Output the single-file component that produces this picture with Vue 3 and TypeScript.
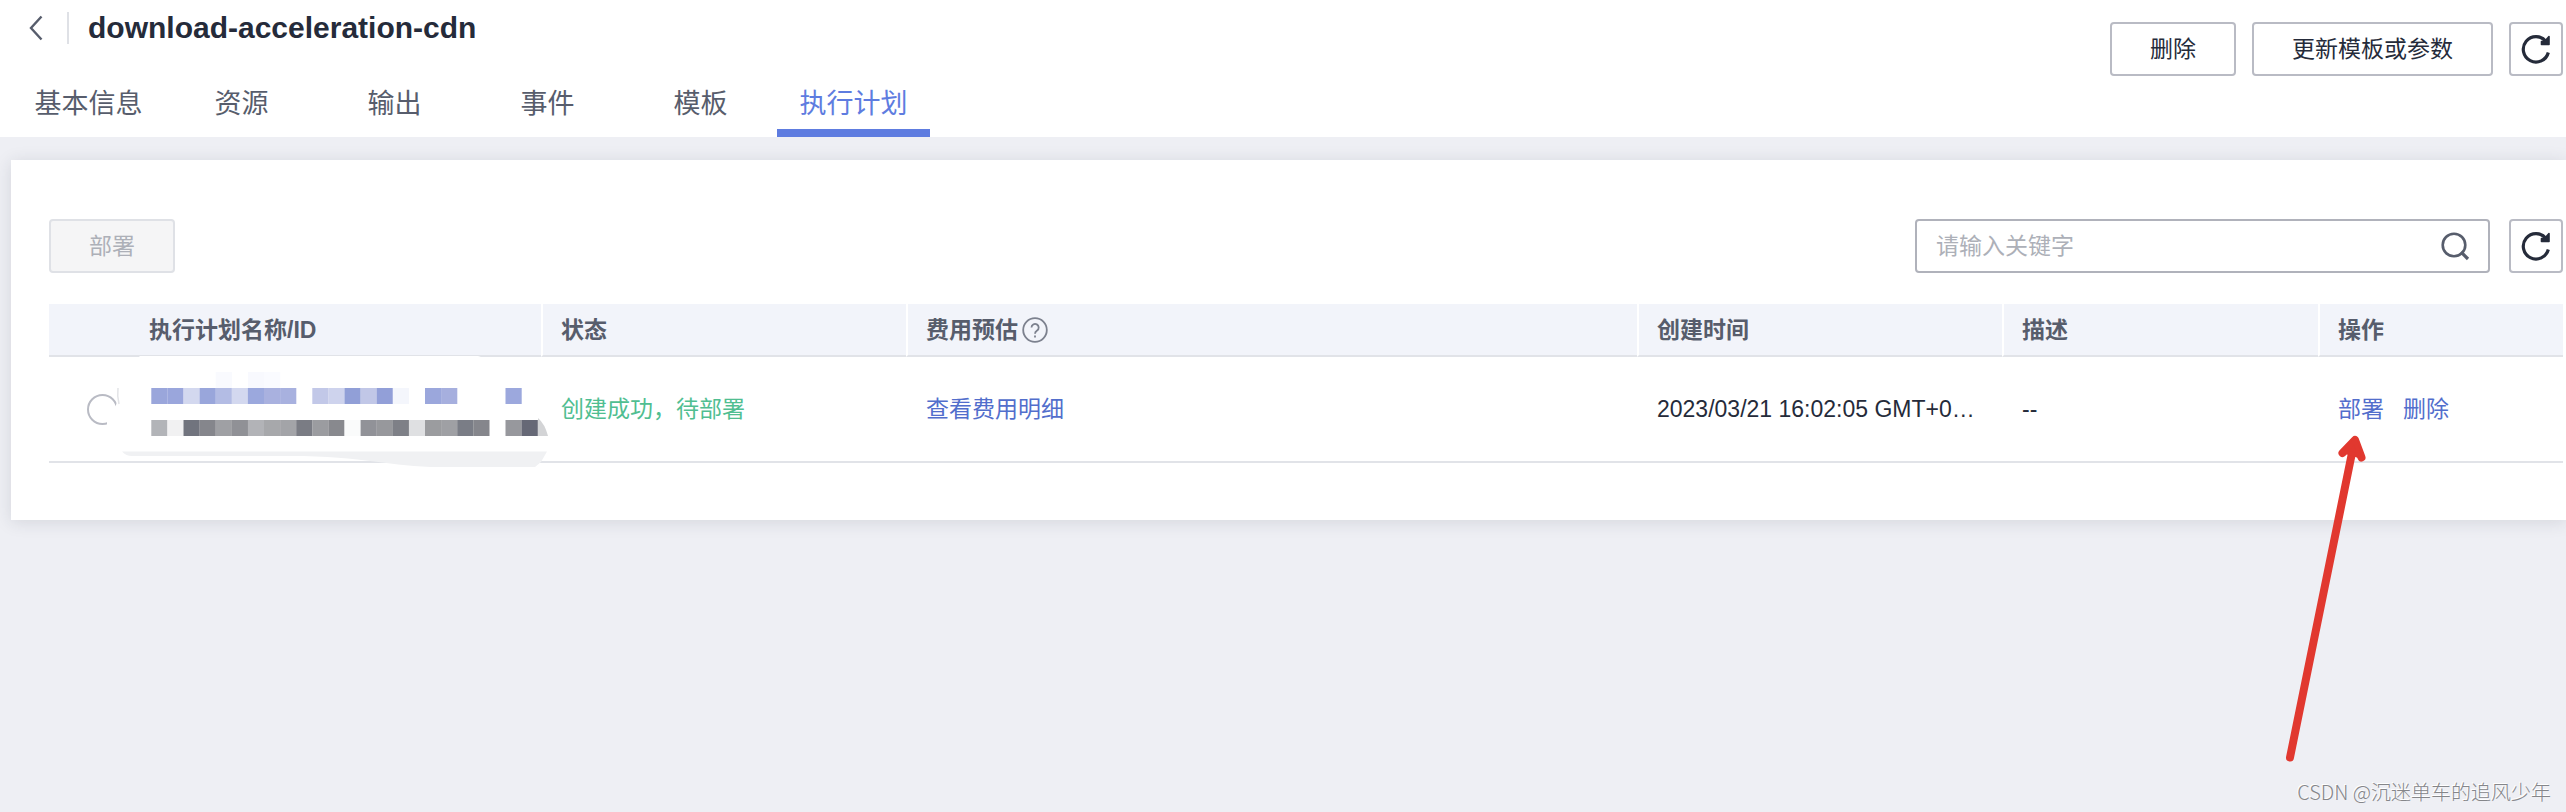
<script setup lang="ts">
import { ref } from 'vue'

interface Plan {
  id: string
  status: string
  createdAt: string
  description: string
}

interface Cell {
  col: number
  row: number
  fill: string
}

const tabs: string[] = ['基本信息', '资源', '输出', '事件', '模板', '执行计划']
const activeTab = ref<string>('执行计划')
const keyword = ref<string>('')
const selected = ref<string>('')

const plans: Plan[] = [
  {
    id: 'plan-1',
    status: '创建成功，待部署',
    createdAt: '2023/03/21 16:02:05 GMT+0…',
    description: '--',
  },
]

// One colour per mosaic block; an empty string leaves the block out.
const mosaicRows: string[][] = [
  ['', '', '', '', '#f9fafe', '', '#f8f9fe', '#fafbff'],
  [
    '#9aa6db', '#9aa6dc', '#d3d8ef', '#99a6db', '#b3bce4', '#d3d8ef', '#9ba8dd', '#a9b1df', '#a8b1df', '',
    '#c2c8e8', '#ced3ed', '#919fd7', '#c1c7e7', '#929fd8', '#f4f6fc', '', '#9ba7dc', '#a6afde', '',
    '', '', '#9ca8dd',
  ],
  [],
  [
    '#b2b4b8', '#f1f1f2', '#71747e', '#85868c', '#9fa0a4', '#909196', '#b2b3b7', '#a7a8ab', '#a3a4a8', '#7a7c84',
    '#9b9ca0', '#88898e', '#fafbfb', '#919298', '#97989c', '#7e8087', '#dfe0e2', '#9b9c9f', '#9fa0a4', '#7a7d86',
    '#85868c', '', '#97989d', '#666876',
  ],
]

const mosaic: Cell[] = mosaicRows.flatMap((colors, row) =>
  colors.map((fill, col) => ({ col, row, fill })).filter((cell) => cell.fill !== ''),
)
</script>

<template>
  <div class="page">
    <header class="header">
      <div class="header-main">
        <div class="title-row">
          <button class="back" type="button" aria-label="返回">
            <svg width="14" height="26" viewBox="0 0 14 26" fill="none" stroke="#575d6c" stroke-width="2.4">
              <path d="M12.500 1.500L2 13l10.500 11.500" />
            </svg>
          </button>
          <h1 class="title">download-acceleration-cdn</h1>
        </div>
        <nav class="tabs">
          <button
            v-for="tab in tabs"
            :key="tab"
            type="button"
            class="tab"
            :class="{ active: tab === activeTab }"
            @click="activeTab = tab"
          >
            {{ tab }}
          </button>
        </nav>
      </div>
      <div class="header-actions">
        <button class="btn" type="button">删除</button>
        <button class="btn wide" type="button">更新模板或参数</button>
        <button class="btn square" type="button" aria-label="刷新">
          <svg width="30" height="30" viewBox="0 0 30 30" fill="none">
            <path d="M27.300 18.500A12.700 12.700 0 1 1 25 7.500" stroke="#252b3a" stroke-width="3.200" />
            <path d="M28 2.500V10.500H20.500V7.500L24 7Z" fill="#252b3a" stroke="#252b3a" stroke-width="1.600" stroke-linejoin="round" />
          </svg>
        </button>
      </div>
    </header>

    <main class="card">
      <div class="toolbar">
        <button class="btn" type="button" disabled>部署</button>
        <div class="toolbar-right">
          <div class="search">
            <input v-model="keyword" type="text" placeholder="请输入关键字" aria-label="请输入关键字" />
            <button class="search-btn" type="button" aria-label="搜索">
              <svg width="30" height="30" viewBox="0 0 30 30" fill="none" stroke="#575d6c" stroke-width="2.600">
                <circle cx="14" cy="14" r="11.300" />
                <path d="M21 21L28 28" stroke-width="3.200" />
              </svg>
            </button>
          </div>
          <button class="btn square" type="button" aria-label="刷新列表">
            <svg width="30" height="30" viewBox="0 0 30 30" fill="none">
              <path d="M27.300 18.500A12.700 12.700 0 1 1 25 7.500" stroke="#252b3a" stroke-width="3.200" />
              <path d="M28 2.500V10.500H20.500V7.500L24 7Z" fill="#252b3a" stroke="#252b3a" stroke-width="1.600" stroke-linejoin="round" />
            </svg>
          </button>
        </div>
      </div>

      <table class="table">
        <colgroup>
          <col class="col-select" />
          <col class="col-name" />
          <col class="col-status" />
          <col />
          <col class="col-time" />
          <col class="col-desc" />
          <col class="col-ops" />
        </colgroup>
        <thead>
          <tr>
            <th class="plain"></th>
            <th class="plain">执行计划名称/ID</th>
            <th>状态</th>
            <th>
              <span class="with-help">
                费用预估
                <svg width="26" height="26" viewBox="0 0 26 26" fill="none" stroke="#7c818e" stroke-width="1.800">
                  <circle cx="13" cy="13" r="11.800" />
                  <path d="M9.500 10.500a3.600 3.600 0 1 1 5.600 3C13.600 14.500 13 15 13 16.800" />
                  <path d="M13 18.500v2" />
                </svg>
              </span>
            </th>
            <th>创建时间</th>
            <th>描述</th>
            <th>操作</th>
          </tr>
        </thead>
        <tbody>
          <tr v-for="plan in plans" :key="plan.id">
            <td class="select-cell">
              <input v-model="selected" type="radio" name="plan" :value="plan.id" aria-label="选择执行计划" />
            </td>
            <td class="name-cell">
              <svg class="mosaic" width="460" height="125" viewBox="100 350 460 125" aria-hidden="true">
                <path d="M140 356H478L490 360H530L538 418V436H548L545 451H122L112 426H107V419L116 405L119 395V375Z" fill="#fff" />
                <path d="M118 388q-1 8 1 16" fill="none" stroke="#e3e4e7" stroke-width="1.500" />
                <path d="M122 451.500H547L541 462L535 467H440C390 467 365 456 290 456H132Q126 456 122 451.500Z" fill="#f0f1f3" />
                <path d="M538 418Q545 424 548 436H538Z" fill="#d3d4d6" />
                <rect
                  v-for="cell in mosaic"
                  :key="`${cell.row}-${cell.col}`"
                  :x="151.3 + cell.col * 16.1"
                  :y="372 + cell.row * 16"
                  width="16.2"
                  height="16"
                  :fill="cell.fill"
                />
              </svg>
            </td>
            <td class="status">{{ plan.status }}</td>
            <td><a href="#">查看费用明细</a></td>
            <td>{{ plan.createdAt }}</td>
            <td>{{ plan.description }}</td>
            <td>
              <span class="ops">
                <a href="#">部署</a>
                <a href="#">删除</a>
              </span>
            </td>
          </tr>
        </tbody>
      </table>
    </main>

    <svg class="arrow" width="90" height="340" viewBox="2280 430 90 340" fill="none" stroke="#e1382f" stroke-linecap="round" stroke-linejoin="round" aria-hidden="true">
      <path d="M2290 757.500L2354 443" stroke-width="8" />
      <path d="M2342.500 453L2355 440L2361.500 457.500" stroke-width="8" />
      <path d="M2355 440L2346 452L2359 456Z" fill="#e1382f" stroke-width="4" />
    </svg>
    <div class="watermark">CSDN @沉迷单车的追风少年</div>
  </div>
</template>

<style>
body {
  margin: 0;
}
</style>

<style scoped>
.page {
  position: relative;
  box-sizing: border-box;
  min-height: 100vh;
  overflow: hidden;
  background: #eeeff4;
  color: #252b3a;
  font-family: 'Liberation Sans', 'Noto Sans CJK SC', sans-serif;
  font-size: 23px;
  line-height: 34px;
}

button,
input {
  margin: 0;
  padding: 0;
  border: 0;
  background: none;
  color: inherit;
  font: inherit;
}

button svg {
  display: block;
}

.header {
  display: flex;
  justify-content: space-between;
  background: #fff;
}

.title-row {
  display: flex;
  align-items: center;
  height: 56px;
  margin-bottom: 14px;
  padding-left: 29px;
}

.back {
  padding-right: 24px;
}

.title {
  margin: 0;
  padding-left: 19px;
  border-left: 2px solid #dfe1e6;
  font-size: 30px;
  line-height: 32px;
}

.tabs {
  display: flex;
  padding-left: 12px;
}

.tab {
  box-sizing: border-box;
  width: 153px;
  height: 67px;
  border-top: 8px solid transparent;
  border-bottom: 8px solid transparent;
  color: #575d6c;
  font-size: 27px;
  white-space: nowrap;
}

.tab.active {
  border-bottom-color: #5e7ce0;
  color: #5e7ce0;
}

.header-actions {
  display: flex;
  align-items: flex-start;
  gap: 16px;
  padding: 22px 3px 0 0;
}

.btn {
  display: flex;
  align-items: center;
  justify-content: center;
  box-sizing: border-box;
  width: 126px;
  height: 54px;
  border: 2px solid #b9bbc4;
  border-radius: 4px;
  background: #fff;
  white-space: nowrap;
}

.btn.wide {
  width: 241px;
}

.btn.square {
  width: 54px;
}

.btn:disabled {
  border-color: #dfe1e6;
  background: #f5f5f6;
  color: #adb0b8;
}

.card {
  margin: 23px 0 0 11px;
  padding: 59px 3px 57px 38px;
  background: #fff;
  box-shadow: 0 2px 16px rgba(37, 43, 58, 0.13);
}

.toolbar {
  display: flex;
  justify-content: space-between;
  margin-bottom: 31px;
}

.toolbar-right {
  display: flex;
  gap: 19px;
}

.search {
  display: flex;
  align-items: center;
  box-sizing: border-box;
  width: 575px;
  height: 54px;
  padding: 0 18px 0 19px;
  border: 2px solid #b0b2bb;
  border-radius: 4px;
}

.search input {
  flex: 1;
  min-width: 0;
  outline: none;
}

.search input::placeholder {
  color: #adb0b8;
  opacity: 1;
}

.table {
  width: 100%;
  border-collapse: separate;
  border-spacing: 0;
  table-layout: fixed;
}

.col-select {
  width: 80px;
}

.col-name {
  width: 412px;
}

.col-status {
  width: 365px;
}

.col-time {
  width: 365px;
}

.col-desc {
  width: 316px;
}

.col-ops {
  width: 245px;
}

th,
td {
  box-sizing: border-box;
  padding: 0 0 0 20px;
  border-bottom: 2px solid #e1e3e8;
  text-align: left;
  white-space: nowrap;
}

th {
  height: 53px;
  padding-left: 18px;
  border-left: 2px solid #fff;
  background: #f2f4fa;
  color: #575d6c;
  font-weight: 700;
}

th.plain {
  padding-left: 20px;
  border-left: 0;
}

td {
  height: 106px;
}

.with-help {
  display: flex;
  align-items: center;
  gap: 4px;
}

.select-cell {
  padding-left: 38px;
}

.select-cell input {
  display: block;
  box-sizing: border-box;
  width: 31px;
  height: 31px;
  border: 2px solid #b9bbc4;
  border-radius: 50%;
  appearance: none;
}

.name-cell {
  position: relative;
}

.mosaic {
  position: absolute;
  top: -7px;
  left: -29px;
  pointer-events: none;
}

.status {
  color: #50be91;
}

a {
  color: #526ecc;
  text-decoration: none;
}

.ops {
  display: flex;
  gap: 19px;
}

.arrow {
  position: absolute;
  top: 430px;
  right: 196px;
  pointer-events: none;
}

.watermark {
  position: absolute;
  right: 15px;
  bottom: 5px;
  color: #85868a;
  font-family: 'Noto Sans CJK SC', sans-serif;
  font-size: 20px;
  font-weight: 300;
  line-height: 30px;
  text-shadow: -1px -1px 0 #fff;
}
</style>
